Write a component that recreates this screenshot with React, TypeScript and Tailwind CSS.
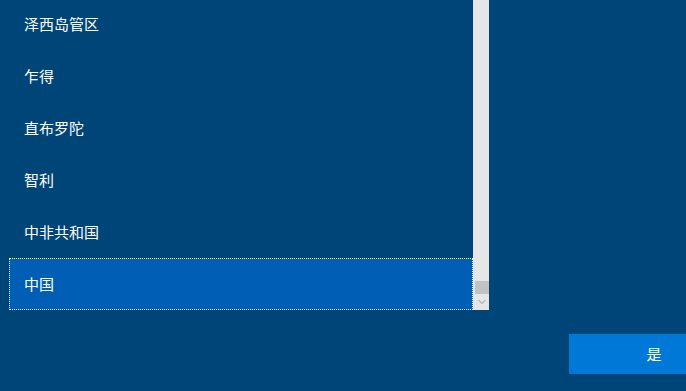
import { ChevronDown } from "lucide-react";

const regions = ["泽西岛管区", "乍得", "直布罗陀", "智利", "中非共和国", "中国"];
const selected = "中国";

const row = (active: boolean) =>
  [
    "ml-[9px] w-[464px] h-[52px] shrink-0 flex items-center pl-[14px] text-[15px] text-white",
    active ? "bg-[#005fb4] border border-dotted border-white" : "border border-transparent",
  ].join(" ");

export default function App() {
  return (
    <div
      className="w-[686px] h-[391px] bg-[#004578] overflow-hidden flex flex-col"
      style={{ fontFamily: '"Microsoft YaHei", "Noto Sans CJK SC", sans-serif' }}
    >
      {/* 列表 + 滚动条 */}
      <div className="flex flex-row h-[310px]">
        <div className="w-[473px] h-full overflow-hidden flex flex-col justify-end">
          {regions.map((name) => (
            <div key={name} className={row(name === selected)}>
              {name}
            </div>
          ))}
        </div>
        <div className="w-[16px] h-full bg-[#e6e6e6] border-l-2 border-[#dbe7f2] flex flex-col">
          <div className="flex-1" />
          <div className="h-[13px] bg-[#c2c2c2]" />
          <div className="h-[16px] flex items-center justify-center text-[#606060]">
            <ChevronDown className="w-[12px] h-[12px]" strokeWidth={1.25} />
          </div>
        </div>
      </div>

      {/* 按钮 */}
      <div className="flex justify-end mt-[24px]">
        <button
          type="button"
          className="w-[170px] h-[40px] -mr-[53px] shrink-0 bg-[#0078d7] text-white text-[15px] flex items-center justify-center"
        >
          是
        </button>
      </div>
    </div>
  );
}
